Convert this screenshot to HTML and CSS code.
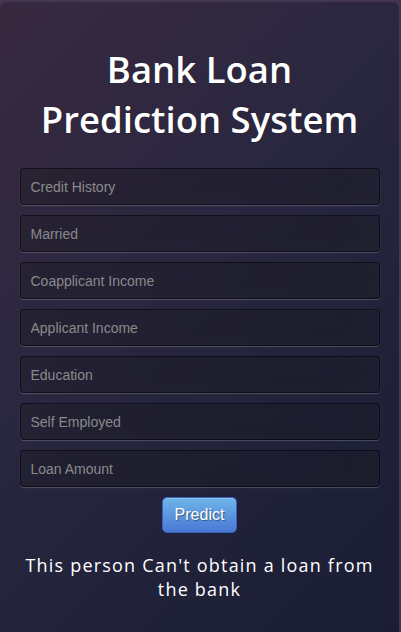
FILE: index.html
```html
<!DOCTYPE html>
<html>
<head>
<meta charset="utf-8">
<link rel="stylesheet" href="styles.css">
</head>
<body>
<div class="card">
  <h1 class="title">Bank Loan<br>Prediction System</h1>
  <form class="form">
    <input class="field" type="text" placeholder="Credit History">
    <input class="field" type="text" placeholder="Married">
    <input class="field" type="text" placeholder="Coapplicant Income">
    <input class="field" type="text" placeholder="Applicant Income">
    <input class="field" type="text" placeholder="Education">
    <input class="field" type="text" placeholder="Self Employed">
    <input class="field" type="text" placeholder="Loan Amount">
    <button class="btn" type="button">Predict</button>
  </form>
  <p class="result">This person Can't obtain a loan from the bank</p>
</div>
</body>
</html>
```

FILE: styles.css
```css
html, body {
  margin: 0;
  padding: 0;
  height: 100%;
}
body {
  background: #433752;
  overflow: hidden;
}
.card {
  margin-top: 2px;
  width: 399px;
  height: 640px;
  border-radius: 6px 6px 0 0;
  background: linear-gradient(135deg, #38293f 0%, #2a2740 40%, #1f2139 75%, #1b1d34 100%);
  padding-top: 42px;
  box-sizing: border-box;
}
.title {
  margin: 0;
  font-family: "Open Sans", sans-serif;
  font-weight: 600;
  font-size: 36.5px;
  line-height: 50px;
  color: #fff;
  text-align: center;
  text-shadow: 0 0 1px rgba(0,0,0,0.4);
}
.form {
  margin: 24px 0 0;
  padding: 0 20px;
  display: flex;
  flex-direction: column;
  align-items: center;
}
.field {
  width: 360px;
  height: 37px;
  margin: 0 0 10px;
  box-sizing: border-box;
  padding: 0 10px;
  background: rgba(0,0,0,0.25);
  border: 1px solid rgba(0,0,0,0.45);
  border-radius: 4px;
  box-shadow: inset 0 -5px 45px rgba(100,100,100,0.12), 0 1px 1px rgba(255,255,255,0.2);
  font-family: "Liberation Sans", Arial, sans-serif;
  font-size: 14px;
  color: #ddd;
  outline: none;
}
.field::placeholder {
  color: #8a8a8c;
}
.btn {
  width: 75px;
  height: 36px;
  margin-top: 0;
  border: 1px solid #3762bc;
  border-radius: 5px;
  background: linear-gradient(to bottom, #6eb6ea, #4a77d4);
  color: #fff;
  font-family: "Liberation Sans", Arial, sans-serif;
  font-size: 16px;
  text-shadow: 1px 1px 1px rgba(0,0,0,0.4);
  box-shadow: inset 0 1px 0 rgba(255,255,255,0.2), 0 1px 2px rgba(0,0,0,0.05);
  padding: 0;
}
.result {
  margin: 20px 0 0;
  padding: 0 20px;
  font-family: "Open Sans", sans-serif;
  font-size: 18px;
  line-height: 24px;
  letter-spacing: 1.2px;
  color: #fff;
  text-align: center;
}
```
